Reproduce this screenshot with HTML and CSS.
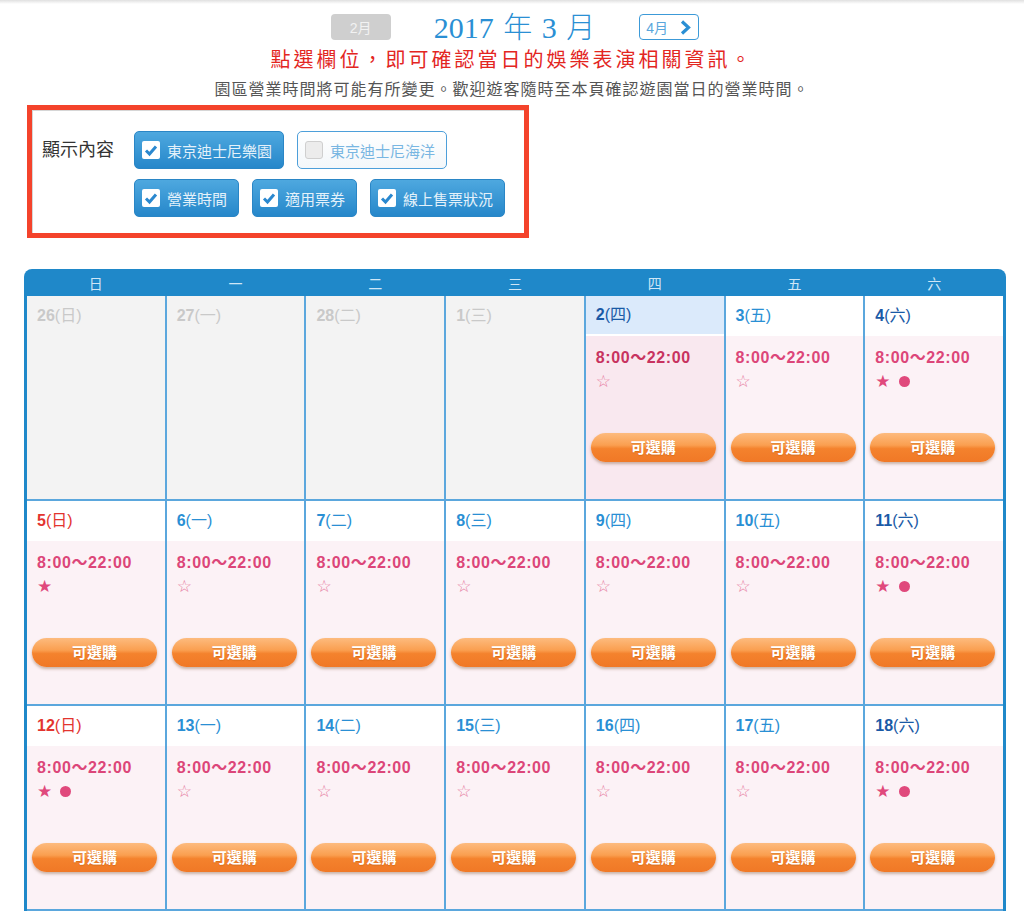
FILE: index.html
```html
<!DOCTYPE html>
<html lang="zh-Hant">
<head>
<meta charset="utf-8">
<title>2017 年 3 月</title>
<link rel="stylesheet" href="styles.css">
</head>
<body>
<div class="topshade"></div>
<header class="nav">
  <a class="month prev">2月</a>
  <h1 class="title">2017 <span class="cjk">年</span> 3 <span class="cjk">月</span></h1>
  <a class="month next">4月<svg class="chev" width="11" height="15" viewBox="0 0 11 15"><polyline points="2,1.5 8.5,7.5 2,13.5" fill="none" stroke="#2a8fd4" stroke-width="3.2"/></svg></a>
</header>
<p class="notice">點選欄位，即可確認當日的娛樂表演相關資訊。</p>
<p class="sub">園區營業時間將可能有所變更。歡迎遊客隨時至本頁確認遊園當日的營業時間。</p>

<section class="filter">
  <div class="filter-label">顯示內容</div>
  <div class="filter-opts">
    <div class="opt-row">
      <label class="opt on"><span class="box"><svg width="18" height="18" viewBox="0 0 18 18"><polyline points="4,9.5 7.5,13 14,5.5" fill="none" stroke="#2a88cf" stroke-width="3"/></svg></span>東京迪士尼樂園</label>
      <label class="opt off"><span class="box"></span>東京迪士尼海洋</label>
    </div>
    <div class="opt-row">
      <label class="opt on"><span class="box"><svg width="18" height="18" viewBox="0 0 18 18"><polyline points="4,9.5 7.5,13 14,5.5" fill="none" stroke="#2a88cf" stroke-width="3"/></svg></span>營業時間</label>
      <label class="opt on"><span class="box"><svg width="18" height="18" viewBox="0 0 18 18"><polyline points="4,9.5 7.5,13 14,5.5" fill="none" stroke="#2a88cf" stroke-width="3"/></svg></span>適用票券</label>
      <label class="opt on"><span class="box"><svg width="18" height="18" viewBox="0 0 18 18"><polyline points="4,9.5 7.5,13 14,5.5" fill="none" stroke="#2a88cf" stroke-width="3"/></svg></span>線上售票狀況</label>
    </div>
  </div>
</section>

<section class="cal">
  <div class="cal-head">
    <span>日</span><span>一</span><span>二</span><span>三</span><span>四</span><span>五</span><span>六</span>
  </div>
  <div class="cal-grid">
    <div class="cell past"><div class="d"><b>26</b>(日)</div></div>
    <div class="cell past"><div class="d"><b>27</b>(一)</div></div>
    <div class="cell past"><div class="d"><b>28</b>(二)</div></div>
    <div class="cell past"><div class="d"><b>1</b>(三)</div></div>
    <div class="cell today"><div class="d"><b>2</b>(四)</div><div class="body"><div class="time">8:00～22:00</div><div class="mark"><span class="hollow">☆</span></div></div><a class="buy">可選購</a></div>
    <div class="cell"><div class="d wk"><b>3</b>(五)</div><div class="body"><div class="time">8:00～22:00</div><div class="mark"><span class="hollow">☆</span></div></div><a class="buy">可選購</a></div>
    <div class="cell"><div class="d sat"><b>4</b>(六)</div><div class="body"><div class="time">8:00～22:00</div><div class="mark"><span>★</span><span class="dot"></span></div></div><a class="buy">可選購</a></div>

    <div class="cell"><div class="d sun"><b>5</b>(日)</div><div class="body"><div class="time">8:00～22:00</div><div class="mark"><span>★</span></div></div><a class="buy">可選購</a></div>
    <div class="cell"><div class="d wk"><b>6</b>(一)</div><div class="body"><div class="time">8:00～22:00</div><div class="mark"><span class="hollow">☆</span></div></div><a class="buy">可選購</a></div>
    <div class="cell"><div class="d wk"><b>7</b>(二)</div><div class="body"><div class="time">8:00～22:00</div><div class="mark"><span class="hollow">☆</span></div></div><a class="buy">可選購</a></div>
    <div class="cell"><div class="d wk"><b>8</b>(三)</div><div class="body"><div class="time">8:00～22:00</div><div class="mark"><span class="hollow">☆</span></div></div><a class="buy">可選購</a></div>
    <div class="cell"><div class="d wk"><b>9</b>(四)</div><div class="body"><div class="time">8:00～22:00</div><div class="mark"><span class="hollow">☆</span></div></div><a class="buy">可選購</a></div>
    <div class="cell"><div class="d wk"><b>10</b>(五)</div><div class="body"><div class="time">8:00～22:00</div><div class="mark"><span class="hollow">☆</span></div></div><a class="buy">可選購</a></div>
    <div class="cell"><div class="d sat"><b>11</b>(六)</div><div class="body"><div class="time">8:00～22:00</div><div class="mark"><span>★</span><span class="dot"></span></div></div><a class="buy">可選購</a></div>

    <div class="cell"><div class="d sun"><b>12</b>(日)</div><div class="body"><div class="time">8:00～22:00</div><div class="mark"><span>★</span><span class="dot"></span></div></div><a class="buy">可選購</a></div>
    <div class="cell"><div class="d wk"><b>13</b>(一)</div><div class="body"><div class="time">8:00～22:00</div><div class="mark"><span class="hollow">☆</span></div></div><a class="buy">可選購</a></div>
    <div class="cell"><div class="d wk"><b>14</b>(二)</div><div class="body"><div class="time">8:00～22:00</div><div class="mark"><span class="hollow">☆</span></div></div><a class="buy">可選購</a></div>
    <div class="cell"><div class="d wk"><b>15</b>(三)</div><div class="body"><div class="time">8:00～22:00</div><div class="mark"><span class="hollow">☆</span></div></div><a class="buy">可選購</a></div>
    <div class="cell"><div class="d wk"><b>16</b>(四)</div><div class="body"><div class="time">8:00～22:00</div><div class="mark"><span class="hollow">☆</span></div></div><a class="buy">可選購</a></div>
    <div class="cell"><div class="d wk"><b>17</b>(五)</div><div class="body"><div class="time">8:00～22:00</div><div class="mark"><span class="hollow">☆</span></div></div><a class="buy">可選購</a></div>
    <div class="cell"><div class="d sat"><b>18</b>(六)</div><div class="body"><div class="time">8:00～22:00</div><div class="mark"><span>★</span><span class="dot"></span></div></div><a class="buy">可選購</a></div>
  </div>
</section>
</body>
</html>
```

FILE: styles.css
```css
body {
  margin: 0;
  background: #fff;
  color: #333;
  font-family: "Liberation Sans", "Noto Sans CJK TC", sans-serif;
}

.topshade {
  height: 4px;
  background: linear-gradient(#e0e0e0, #fff);
}

/* month navigation */
.nav {
  display: flex;
  justify-content: center;
  align-items: center;
  height: 26px;
  margin-top: 10px;
  padding-left: 6px;
}
.month {
  box-sizing: border-box;
  width: 60px;
  height: 26px;
  border-radius: 4px;
  font-size: 14px;
  display: flex;
  align-items: center;
}
.prev {
  background: #cfcfcf;
  color: #f2f2f2;
  justify-content: center;
}
.next {
  background: #fff;
  border: 1px solid #3c9ad8;
  color: #5aa6dc;
  justify-content: space-between;
  padding: 0 7px 0 6px;
}
.title {
  margin: 0 44px 0 43px;
  font: normal 30px/1 "Liberation Serif", "Noto Sans CJK TC", serif;
  color: #2a8fd4;
  word-spacing: 2px;
}
.title .cjk {
  font-family: "Noto Sans CJK TC", sans-serif;
  font-weight: 300;
  font-size: 29px;
}

.notice {
  margin: 8px 0 0;
  text-align: center;
  font-size: 20px;
  line-height: 24px;
  letter-spacing: 3px;
  color: #e3261f;
  font-weight: 400;
}
.sub {
  margin: 8px 0 0;
  text-align: center;
  font-size: 16px;
  line-height: 20px;
  letter-spacing: 1px;
  color: #555;
}

/* filter box */
.filter {
  box-sizing: border-box;
  width: 502px;
  height: 133px;
  margin: 5px 0 0 27px;
  border: 5px solid #f4432b;
  box-shadow: inset 1px 1px 0 #d6d6d6;
  padding: 21px 0 0 10px;
  display: flex;
  gap: 19px;
}
.filter-label {
  font-size: 18px;
  line-height: 38px;
  color: #333;
  width: 73px;
}
.filter-opts {
  display: flex;
  flex-direction: column;
  gap: 10px;
}
.opt-row {
  display: flex;
  gap: 13px;
}
.opt {
  box-sizing: border-box;
  height: 38px;
  display: flex;
  align-items: center;
  gap: 7px;
  padding: 0 11px 0 7px;
  border: 1px solid;
  border-radius: 5px;
  font-size: 15px;
}
.opt.on {
  background: linear-gradient(#4ea8df, #2687ca);
  border-color: #2a86c6;
  color: #e4f1fa;
}
.opt.off {
  background: linear-gradient(#fff, #f3f7fa);
  border-color: #4d9fda;
  color: #78b6e2;
}
.box {
  width: 18px;
  height: 18px;
  border-radius: 2px;
  background: #fff;
  display: flex;
}
.off .box {
  box-sizing: border-box;
  background: #ececec;
  border: 1px solid #cfcfcf;
  border-radius: 3px;
}

/* calendar */
.cal {
  box-sizing: border-box;
  width: 982px;
  margin: 31px 0 0 24px;
  padding: 0 3px;
  background: #1f88c9;
  border-radius: 8px 8px 0 0;
}
.cal-head {
  display: grid;
  grid-template-columns: repeat(7, 1fr);
  column-gap: 2px;
  height: 27px;
  align-items: center;
}
.cal-head span {
  text-align: center;
  color: #cfe6f6;
  font-size: 14px;
}
.cal-grid {
  display: grid;
  grid-template-columns: repeat(7, 1fr);
  grid-auto-rows: 203px;
  gap: 2px;
  padding-bottom: 2px;
  background: #5ba7dd;
}
.cell {
  background: #fcf2f6;
  display: flex;
  flex-direction: column;
  align-items: flex-start;
}
.d {
  align-self: stretch;
  height: 40px;
  line-height: 40px;
  padding-left: 10px;
  background: #fff;
  font-size: 16px;
  color: #2a8fd4;
}
.d b { font-weight: bold; }
.d.sun { color: #e3342f; }
.d.sat { color: #1a5aa6; }
.d.wk { color: #2a8fd4; }

.past { background: #f3f3f3; }
.past .d { background: transparent; color: #c9c9c9; }

.today { background: #f9e8ef; }
.today .d {
  height: 38px;
  line-height: 38px;
  background: #dbeafb;
  border-bottom: 2px solid #fff;
  color: #1a5aa6;
}
.today .time { color: #c8335f; }

.body {
  padding: 12px 0 0 10px;
}
.time {
  font: bold 16px/20px "Liberation Sans", "Noto Sans CJK TC", sans-serif;
  letter-spacing: 0.6px;
  color: #dc4679;
}
.mark {
  margin-top: 3px;
  height: 20px;
  display: flex;
  align-items: center;
  font: 17px/20px "DejaVu Sans", sans-serif;
  color: #e0497c;
}
.mark .hollow { color: #e67aa0; }
.dot {
  display: inline-block;
  width: 11px;
  height: 11px;
  border-radius: 50%;
  background: #e0497c;
  margin-left: 8px;
}
.buy {
  display: block;
  width: 125px;
  height: 29px;
  margin: 42px 0 0 5px;
  border-radius: 15px;
  background: linear-gradient(to bottom, #fdbb7e 0%, #fa9f50 42%, #f4822d 54%, #f07826 100%);
  box-shadow: 0 2px 3px rgba(110, 60, 20, 0.35);
  color: #fff;
  font: bold 15px/29px "Liberation Sans", "Noto Sans CJK TC", sans-serif;
  text-align: center;
  text-shadow: 0 1px 1px rgba(170, 80, 0, 0.35);
}
```
